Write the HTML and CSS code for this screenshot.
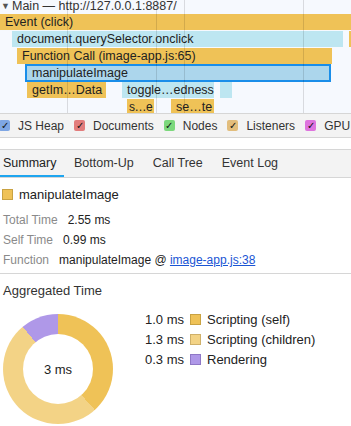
FILE: index.html
```html
<!DOCTYPE html>
<html lang="en">

<head>
  <meta charset="UTF-8">
  <meta name="viewport" content="width=device-width, initial-scale=1.0">
  <title>Performance - Summary</title>
  <link rel="stylesheet" href="styles.css">
</head>

<body>
  <div class="flame">
    <!-- time grid -->
    <div class="grid-line" style="left: 67px"></div>
    <div class="grid-line" style="left: 156px"></div>
    <div class="grid-line" style="left: 184px"></div>
    <div class="grid-line" style="left: 303px"></div>

    <div class="track-head"><span class="arrow">&#9660;</span>Main — http://127.0.0.1:8887/</div>

    <div class="flame-row">
      <div class="bar script" style="left: 0; width: 351px">Event (click)</div>
    </div>
    <div class="flame-row">
      <div class="bar call" style="left: 12px; width: 331px">document.querySelector.onclick</div>
      <div class="bar script" style="left: 349px; width: 1px"></div>
    </div>
    <div class="flame-row">
      <div class="bar script" style="left: 17px; width: 315px">Function Call (image-app.js:65)</div>
    </div>
    <div class="flame-row">
      <div class="bar call selected" style="left: 25px; width: 306px">manipulateImage</div>
    </div>
    <div class="flame-row">
      <div class="bar script" style="left: 27px; width: 79px">getIm…Data</div>
      <div class="bar call" style="left: 122px; width: 92px">toggle…edness</div>
      <div class="bar call" style="left: 220px; width: 12px"></div>
    </div>
    <div class="flame-row">
      <div class="bar script tight" style="left: 127px; width: 27px">s…e</div>
      <div class="bar script" style="left: 171px; width: 43px">se…te</div>
    </div>
  </div>

  <div class="counters">
    <label class="counter"><span class="check blue">&#10003;</span>JS Heap</label>
    <label class="counter"><span class="check red">&#10003;</span>Documents</label>
    <label class="counter"><span class="check green">&#10003;</span>Nodes</label>
    <label class="counter"><span class="check orange">&#10003;</span>Listeners</label>
    <label class="counter"><span class="check purple">&#10003;</span>GPU Memory</label>
  </div>

  <div class="tabs">
    <div class="tab active">Summary</div>
    <div class="tab">Bottom-Up</div>
    <div class="tab">Call Tree</div>
    <div class="tab">Event Log</div>
  </div>

  <div class="summary">
    <div class="summary-title"><span class="swatch self"></span>manipulateImage</div>
    <div class="summary-row"><span class="label">Total Time</span>2.55 ms</div>
    <div class="summary-row"><span class="label">Self Time</span>0.99 ms</div>
    <div class="summary-row"><span class="label">Function</span>manipulateImage @ <a href="#">image-app.js:38</a></div>
  </div>

  <div class="aggregated">
    <div class="agg-title">Aggregated Time</div>
    <div class="agg-body">
      <div class="donut">
        <div class="donut-hole">3 ms</div>
      </div>
      <div class="legend">
        <div class="legend-row"><span class="ms">1.0 ms</span><span class="swatch self"></span>Scripting (self)</div>
        <div class="legend-row"><span class="ms">1.3 ms</span><span class="swatch children"></span>Scripting (children)</div>
        <div class="legend-row"><span class="ms">0.3 ms</span><span class="swatch render"></span>Rendering</div>
      </div>
    </div>
  </div>
</body>

</html>
```

FILE: styles.css
```css
body {
  font-family: "Liberation Sans", Arial, sans-serif;
  font-size: 12px;
  color: #222;
  background-color: #fff;
  margin: 0;
  padding: 0;
  width: 351px;
  height: 426px;
  overflow: hidden;
}

/* flame chart */
.flame {
  position: relative;
  height: 113px;
  background-color: #f6f9fe;
  overflow: hidden;
}

.grid-line {
  position: absolute;
  top: 0;
  bottom: 0;
  width: 1px;
  background-color: rgba(0, 0, 0, 0.12);
  z-index: 2;
}

.track-head {
  height: 14px;
  line-height: 12px;
  padding-left: 1px;
  color: #333;
  font-size: 12.5px;
  white-space: nowrap;
}

.arrow {
  display: inline-block;
  font-size: 9px;
  width: 11px;
  vertical-align: 1px;
  color: #555;
}

.flame-row {
  position: relative;
  height: 17px;
}

.bar {
  position: absolute;
  top: 0;
  height: 16px;
  line-height: 16px;
  padding-left: 5px;
  box-sizing: border-box;
  white-space: nowrap;
  overflow: hidden;
  color: #222;
  font-size: 12.5px;
}

.bar.tight {
  padding-left: 2px;
  font-size: 12px;
  letter-spacing: -0.5px;
}

.bar.script {
  background-color: #efc257;
}

.bar.call {
  background-color: #bde6f1;
}

.bar.selected {
  top: -1px;
  height: 18px;
  line-height: 14px;
  padding-left: 5px;
  background-color: #acd6ec;
  border: 2px solid #1a8ee9;
}

/* counters */
.counters {
  display: flex;
  align-items: center;
  height: 23px;
  background-color: #f3f3f3;
  border-top: 1px solid #d6d6d6;
  border-bottom: 1px solid #d6d6d6;
  gap: 10px;
  white-space: nowrap;
  overflow: hidden;
  font-size: 12px;
  color: #333;
}

.counter {
  display: flex;
  align-items: center;
  flex-shrink: 0;
}

.check {
  display: inline-block;
  width: 11px;
  height: 11px;
  border-radius: 2px;
  margin-right: 8px;
  font-size: 10px;
  line-height: 11px;
  text-align: center;
  color: #111;
}

.counter:first-child .check {
  margin-left: -1px;
}

.check.blue { background-color: #7ea6e4; }
.check.red { background-color: #e27c7c; }
.check.green { background-color: #7cd87c; }
.check.orange { background-color: #e2bd7c; }
.check.purple { background-color: #de74de; }

/* tabs */
.tabs {
  display: flex;
  margin-top: 11px;
  height: 27px;
  background-color: #f3f3f3;
  border-top: 1px solid #d6d6d6;
  border-bottom: 1px solid #d6d6d6;
  font-size: 12.5px;
  color: #333;
}

.tab {
  padding: 0 9px 0 10px;
  line-height: 27px;
  box-sizing: border-box;
}

.tab.active {
  padding-left: 3px;
  width: 64px;
  border-bottom: 2px solid #1ea5ef;
  color: #222;
}

/* summary */
.summary {
  padding: 9px 3px 0 3px;
  height: 86px;
  border-bottom: 1px solid #d6d6d6;
}

.summary-title {
  display: flex;
  align-items: center;
  font-size: 13px;
  height: 14px;
  margin-left: -1px;
  margin-bottom: 9px;
  color: #222;
}

.summary-title .swatch {
  margin-right: 6px;
}

.swatch {
  display: inline-block;
  flex-shrink: 0;
  width: 9px;
  height: 9px;
  border: 1px solid rgba(0, 0, 0, 0.2);
}

.swatch.self { background-color: #efc257; border-color: #c9a242; }
.swatch.children { background-color: #f3d386; border-color: #cfb06a; }
.swatch.render { background-color: #af98e8; border-color: #8f78c6; }

.summary-row {
  height: 20px;
  line-height: 20px;
  color: #222;
}

.summary-row .label {
  color: #8a8a8a;
  margin-right: 10px;
}

.summary-row a {
  color: #1a55d4;
  text-decoration: underline;
}

/* aggregated */
.aggregated {
  padding: 9px 2px 0 3px;
}

.agg-title {
  font-size: 13px;
  color: #333;
  height: 16px;
  margin-bottom: 15px;
}

.agg-body {
  display: flex;
  align-items: flex-start;
}

.donut {
  flex-shrink: 0;
  width: 110px;
  height: 110px;
  border-radius: 50%;
  background: conic-gradient(#efc257 0deg 138deg, #f3d386 138deg 320deg, #af98e8 320deg 360deg);
  display: flex;
  align-items: center;
  justify-content: center;
}

.donut-hole {
  width: 70px;
  height: 70px;
  border-radius: 50%;
  background-color: #fff;
  display: flex;
  align-items: center;
  justify-content: center;
  font-size: 13px;
  color: #222;
}

.legend {
  margin-left: 31px;
  margin-top: -5px;
}

.legend-row {
  display: flex;
  align-items: center;
  height: 20px;
  font-size: 13px;
  color: #222;
  white-space: nowrap;
}

.legend-row .ms {
  flex-shrink: 0;
  width: 40px;
  text-align: right;
  margin-right: 6px;
}

.legend-row .swatch {
  margin-right: 6px;
}
```
